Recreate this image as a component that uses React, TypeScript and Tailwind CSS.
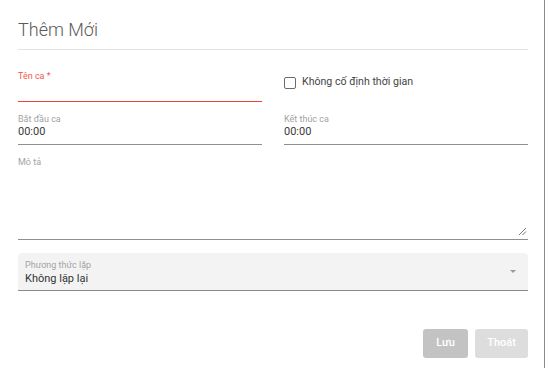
import React from 'react';

const font = { fontFamily: 'Roboto, "Noto Sans", Arial, sans-serif' };

const Label: React.FC<{ children: React.ReactNode; className?: string }> = ({ children, className }) => (
  <div className={`text-[9px] leading-[11px] text-[#a3a3a3] ${className ?? ''}`}>{children}</div>
);

const TimeField: React.FC<{ label: string; value: string }> = ({ label, value }) => (
  <div className="border-b border-[#8f8f8f] pb-[5px]">
    <Label>{label}</Label>
    <div className="text-[11px] leading-[14px] text-[#3a3a3a]">{value}</div>
  </div>
);

const App: React.FC = () => {
  return (
    <div className="w-[547px] h-[368px] bg-white flex" style={font}>
      <div className="w-[545px] h-full border-r border-[#8a8a8a] pl-[18px] pr-[16px] flex flex-col">
        <div className="pt-[18px] pb-[7px] border-b border-[#e2e2e2]">
          <h2 className="text-[18px] leading-[24px] font-light text-[#5a5a5a]">Thêm Mới</h2>
        </div>

        <div className="grid grid-cols-2 gap-x-[22px] mt-[20px]">
          <div className="border-b border-[#f44336] h-[32px]">
            <div className="text-[9px] leading-[12px] text-[#f2584c]">Tên ca *</div>
          </div>
          <label className="flex items-start gap-[6px] pt-[7px]">
            <span className="w-[12px] h-[12px] border-[1.5px] border-[#6b6b6b] rounded-[2px] shrink-0" />
            <span className="text-[10.6px] leading-[12px] text-[#444] -mt-[1px]">Không cố định thời gian</span>
          </label>
        </div>

        <div className="grid grid-cols-2 gap-x-[22px] mt-[12px]">
          <TimeField label="Bắt đầu ca" value="00:00" />
          <TimeField label="Kết thúc ca" value="00:00" />
        </div>

        <div className="mt-[12px] border-b border-[#8f8f8f] relative">
          <Label>Mô tả</Label>
          <div className="h-[71px]" />
          <svg className="absolute right-[1px] bottom-[3px]" width="9" height="9" viewBox="0 0 9 9">
            <path d="M1 8 L8 1 M4.5 8 L8 4.5" stroke="#777" strokeWidth="1" />
          </svg>
        </div>

        <div className="mt-[13px] bg-[#f3f3f3] rounded-t-[4px] border-b border-[#8a8a8a] px-[7px] pt-[7px] pb-[4px] flex items-center">
          <div className="flex-1">
            <div className="text-[9px] leading-[11px] text-[#a3a3a3]">Phương thức lặp</div>
            <div className="text-[11px] leading-[15px] text-[#333]">Không lặp lại</div>
          </div>
          <svg width="6" height="3" viewBox="0 0 6 3" className="mr-[5px] mb-[3px]">
            <path d="M0 0 L6 0 L3 3 Z" fill="#9a9a9a" />
          </svg>
        </div>

        <div className="flex justify-end gap-[7px] mt-[38px]">
          <button className="w-[45px] h-[29px] rounded-[3px] bg-[#c3c3c3] text-white text-[11px] font-medium">Lưu</button>
          <button className="w-[53px] h-[29px] rounded-[3px] bg-[#dddddd] text-white text-[11px] font-medium">Thoát</button>
        </div>
      </div>
    </div>
  );
};

export default App;
